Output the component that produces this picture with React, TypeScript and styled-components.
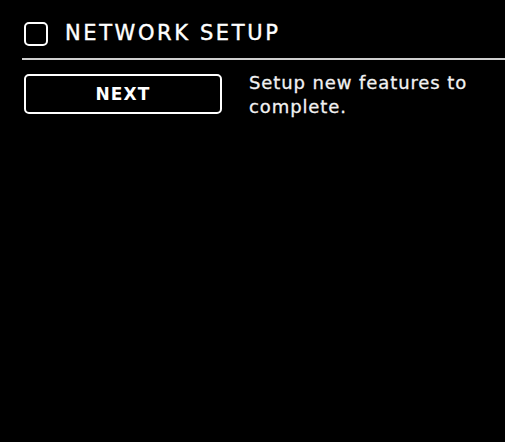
import React from "react";
import styled, { createGlobalStyle } from "styled-components";

const GlobalStyle = createGlobalStyle`
  html, body {
    margin: 0;
    padding: 0;
    background: #000;
  }
  body {
    width: 505px;
    height: 442px;
    overflow: hidden;
    font-family: "DejaVu Sans", "Liberation Sans", sans-serif;
    color: #fff;
  }
`;

const Screen = styled.main`
  display: flex;
  flex-direction: column;
  width: 505px;
  height: 442px;
  padding: 21px 0 0 22px;
  box-sizing: border-box;
`;

const Header = styled.header`
  display: flex;
  align-items: center;
  gap: 17px;
  padding-left: 2px;
  height: 25px;
`;

const CheckBox = styled.span`
  width: 20px;
  height: 20px;
  border: 2.5px solid #fff;
  border-radius: 5px;
`;

const Title = styled.h1`
  margin: 0;
  font-size: 21px;
  font-weight: 400;
  letter-spacing: 2.6px;
  line-height: 1;
  -webkit-text-stroke: 0.4px #fff;
`;

const Divider = styled.hr`
  margin: 12px 0 0;
  border: none;
  height: 2px;
  background: #cfcfcf;
`;

const Row = styled.section`
  display: flex;
  align-items: flex-start;
  gap: 27px;
  margin-top: 14px;
  padding-left: 2px;
`;

const NextButton = styled.button`
  width: 198px;
  height: 40px;
  box-sizing: border-box;
  background: transparent;
  border: 2.5px solid #fff;
  border-radius: 5px;
  color: #fff;
  font-family: "DejaVu Sans", "Liberation Sans", sans-serif;
  font-size: 17px;
  font-weight: 700;
  letter-spacing: 1.1px;
`;

const Description = styled.p`
  margin: -3px 0 0;
  font-size: 18px;
  line-height: 24px;
  font-weight: 400;
  letter-spacing: 0.9px;
  color: #f2f2f2;
  -webkit-text-stroke: 0.3px #f2f2f2;
`;

export default function App() {
  return (
    <>
      <GlobalStyle />
      <Screen>
        <Header>
          <CheckBox />
          <Title>NETWORK SETUP</Title>
        </Header>
        <Divider />
        <Row>
          <NextButton>NEXT</NextButton>
          <Description>
            Setup new features to
            <br />
            complete.
          </Description>
        </Row>
      </Screen>
    </>
  );
}
